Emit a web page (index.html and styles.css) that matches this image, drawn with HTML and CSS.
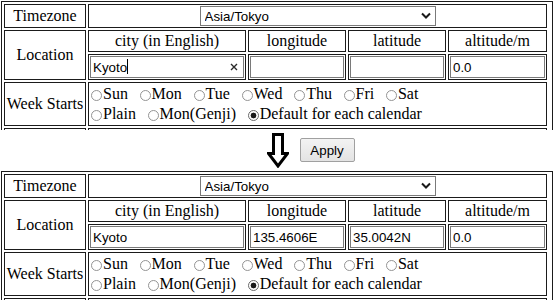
FILE: index.html
```html
<!DOCTYPE html>
<html lang="en">
<head>
    <meta charset="UTF-8">
    <meta name="viewport" content="width=device-width, initial-scale=1.0">
    <title>Location settings</title>
    <link rel="stylesheet" href="styles.css">
</head>
<body>
    <!-- before: city typed, coordinates empty -->
    <div class="shot">
        <table class="settings">
            <tr>
                <td class="label">Timezone</td>
                <td colspan="4" class="center">
                    <span class="select-wrap">
                        <select class="tz"><option>Asia/Tokyo</option></select>
                        <svg class="chevron" width="10" height="7" viewBox="0 0 10 7"><polyline points="1,1.5 5,5.5 9,1.5" fill="none" stroke="#1a1a1a" stroke-width="2"/></svg>
                    </span>
                </td>
            </tr>
            <tr>
                <td class="label" rowspan="2">Location</td>
                <td class="head col-city">city (in English)</td>
                <td class="head col-num">longitude</td>
                <td class="head col-num">latitude</td>
                <td class="head col-alt">altitude/m</td>
            </tr>
            <tr>
                <td>
                    <span class="field">
                        <input class="text" type="text" value="Kyoto">
                        <span class="caret"></span>
                        <svg class="clear" width="8" height="8" viewBox="0 0 8 8"><path d="M1 1L7 7M7 1L1 7" stroke="#2a2a2a" stroke-width="1.4"/></svg>
                    </span>
                </td>
                <td><input class="text" type="text" value=""></td>
                <td><input class="text" type="text" value=""></td>
                <td><input class="text" type="text" value="0.0"></td>
            </tr>
            <tr>
                <td class="label">Week Starts</td>
                <td colspan="4">
                    <div class="opts">
                        <label><input type="radio" name="ws1">Sun</label>
                        <label><input type="radio" name="ws1">Mon</label>
                        <label><input type="radio" name="ws1">Tue</label>
                        <label><input type="radio" name="ws1">Wed</label>
                        <label><input type="radio" name="ws1">Thu</label>
                        <label><input type="radio" name="ws1">Fri</label>
                        <label><input type="radio" name="ws1">Sat</label>
                    </div>
                    <div class="opts">
                        <label><input type="radio" name="ws1">Plain</label>
                        <label><input type="radio" name="ws1">Mon(Genji)</label>
                        <label><input type="radio" name="ws1" checked>Default for each calendar</label>
                    </div>
                </td>
            </tr>
            <tr class="more">
                <td class="label">&nbsp;</td>
                <td colspan="4">&nbsp;</td>
            </tr>
        </table>
    </div>

    <div class="apply-bar">
        <svg class="arrow" width="22" height="35" viewBox="0 0 22 35"><path d="M6.5 1.5H15.5V20.5H20.5L11 33L1.5 20.5H6.5Z" fill="#fff" stroke="#000" stroke-width="3"/></svg>
        <button class="apply" type="button">Apply</button>
    </div>

    <!-- after: coordinates filled in -->
    <div class="shot">
        <table class="settings">
            <tr>
                <td class="label">Timezone</td>
                <td colspan="4" class="center">
                    <span class="select-wrap">
                        <select class="tz"><option>Asia/Tokyo</option></select>
                        <svg class="chevron" width="10" height="7" viewBox="0 0 10 7"><polyline points="1,1.5 5,5.5 9,1.5" fill="none" stroke="#1a1a1a" stroke-width="2"/></svg>
                    </span>
                </td>
            </tr>
            <tr>
                <td class="label" rowspan="2">Location</td>
                <td class="head col-city">city (in English)</td>
                <td class="head col-num">longitude</td>
                <td class="head col-num">latitude</td>
                <td class="head col-alt">altitude/m</td>
            </tr>
            <tr>
                <td><input class="text" type="text" value="Kyoto"></td>
                <td><input class="text" type="text" value="135.4606E"></td>
                <td><input class="text" type="text" value="35.0042N"></td>
                <td><input class="text" type="text" value="0.0"></td>
            </tr>
            <tr>
                <td class="label">Week Starts</td>
                <td colspan="4">
                    <div class="opts">
                        <label><input type="radio" name="ws2">Sun</label>
                        <label><input type="radio" name="ws2">Mon</label>
                        <label><input type="radio" name="ws2">Tue</label>
                        <label><input type="radio" name="ws2">Wed</label>
                        <label><input type="radio" name="ws2">Thu</label>
                        <label><input type="radio" name="ws2">Fri</label>
                        <label><input type="radio" name="ws2">Sat</label>
                    </div>
                    <div class="opts">
                        <label><input type="radio" name="ws2">Plain</label>
                        <label><input type="radio" name="ws2">Mon(Genji)</label>
                        <label><input type="radio" name="ws2" checked>Default for each calendar</label>
                    </div>
                </td>
            </tr>
            <tr class="more">
                <td class="label">&nbsp;</td>
                <td colspan="4">&nbsp;</td>
            </tr>
        </table>
    </div>
</body>
</html>
```

FILE: styles.css
```css
body {
    margin: 0;
    background: #fff;
    color: #000;
    font-family: "Liberation Serif", "Times New Roman", serif;
    font-size: 16px;
}
.shot {
    height: 130px;
    overflow: hidden;
}
.settings {
    margin: 1px 0 0 1px;
    border: 1px solid #1b1b1b;
    border-spacing: 2px;
    padding: 0 3px 0 0;
}
.settings td {
    border: 1px solid #1b1b1b;
    padding: 1px;
    line-height: 18px;
}
.label {
    width: 78px;
    text-align: center;
    white-space: nowrap;
}
.head {
    text-align: center;
}
.col-city {
    width: 154px;
}
.col-num {
    width: 94px;
}
.col-alt {
    width: 95px;
}
.center {
    text-align: center;
}

/* timezone dropdown */
.select-wrap {
    position: relative;
    display: inline-block;
    vertical-align: top;
}
.tz {
    display: block;
    appearance: none;
    width: 236px;
    height: 20px;
    margin: 0;
    padding: 0 0 0 4px;
    border: 1px solid #7a7a7a;
    border-radius: 0;
    background: #fff;
    color: #000;
    font: 13.33px "Liberation Sans", Arial, sans-serif;
}
.chevron {
    position: absolute;
    right: 5px;
    top: 6px;
    pointer-events: none;
}

/* text fields */
.field {
    position: relative;
    display: block;
}
.text {
    display: block;
    box-sizing: border-box;
    width: 100%;
    height: 22px;
    margin: 0;
    padding: 1px 2px;
    border: 1px solid #7a7a7a;
    border-radius: 0;
    color: #000;
    font: 13.33px "Liberation Sans", Arial, sans-serif;
}
.caret {
    position: absolute;
    left: 37px;
    top: 3px;
    width: 1px;
    height: 15px;
    background: #000;
}
.clear {
    position: absolute;
    right: 6px;
    top: 7px;
}

/* week start radios */
.opts {
    display: flex;
    column-gap: 10.7px;
    line-height: 20px;
}
.opts label {
    display: flex;
    align-items: center;
    white-space: nowrap;
}
.opts input {
    appearance: none;
    box-sizing: border-box;
    width: 11px;
    height: 11px;
    margin: 2px 1px 0 1px;
    border: 1px solid #949494;
    border-radius: 50%;
    background: #fff;
}
.opts input:checked {
    border-color: #6a6a6a;
    background: radial-gradient(circle, #1a1a1a 0 2.6px, #fff 3.2px);
}
.more td {
    height: 20px;
}

/* middle strip */
.apply-bar {
    height: 40px;
    display: flex;
    align-items: center;
    justify-content: center;
    gap: 11px;
    padding-left: 68px;
}
.arrow {
    display: block;
}
.apply {
    width: 55px;
    height: 24px;
    margin: 0;
    padding: 0;
    border: 1px solid #a0a0a0;
    border-radius: 2px;
    background: linear-gradient(#f3f3f3, #e3e3e3);
    color: #000;
    font: 13.33px "Liberation Sans", Arial, sans-serif;
}
```
